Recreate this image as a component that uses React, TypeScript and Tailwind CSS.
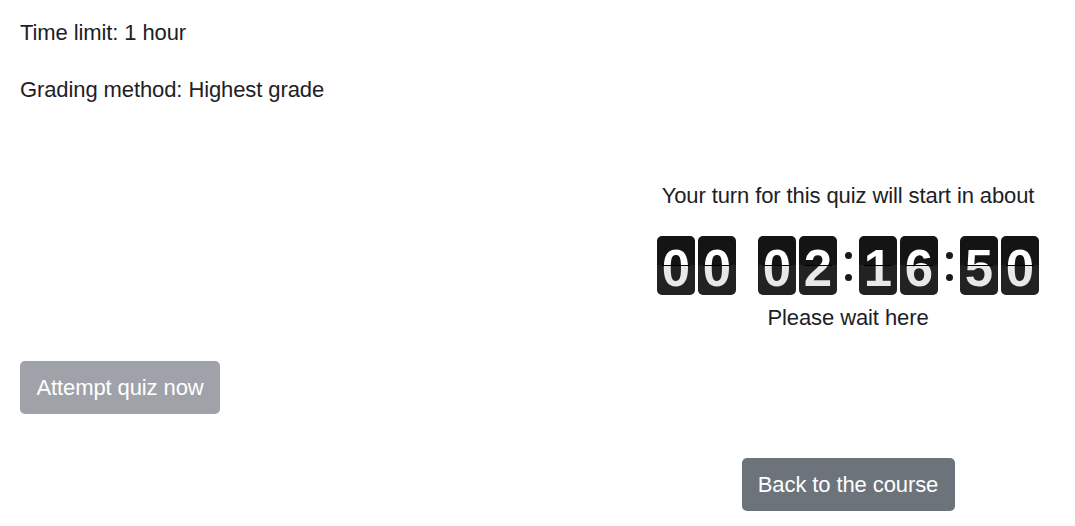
const countdown = [
  ["0", "0"],
  ["0", "2"],
  ["1", "6"],
  ["5", "0"],
];

function FlipCard({ digit }: { digit: string }) {
  return (
    <div className="relative h-[59px] w-[38px] rounded-[5px] bg-[linear-gradient(to_bottom,#141414_50%,#222222_50%)]">
      <span className="flex h-full w-full items-center justify-center bg-[linear-gradient(to_bottom,#ffffff_50%,#e8e8e8_50%)] bg-clip-text pt-[5px] font-['Liberation_Sans',Arial,sans-serif] text-[51px] leading-none font-bold tracking-normal text-transparent">
        {digit}
      </span>
      <div className="absolute top-[29px] right-[5px] left-[5px] h-px bg-black" />
    </div>
  );
}

function Colon() {
  return (
    <div className="flex w-[22px] flex-col items-center pt-[16px]">
      <div className="h-[7px] w-[7px] rounded-full bg-[#1a1a1a]" />
      <div className="mt-[15px] h-[7px] w-[7px] rounded-full bg-[#1a1a1a]" />
    </div>
  );
}

function Clock() {
  return (
    <div className="flex h-[59px]">
      {countdown.map((pair, i) => (
        <div key={i} className="flex">
          {i === 1 && <div className="w-[22px]" />}
          {i > 1 && <Colon />}
          <div className="flex gap-[3px]">
            {pair.map((d, j) => (
              <FlipCard key={j} digit={d} />
            ))}
          </div>
        </div>
      ))}
    </div>
  );
}

export default function App() {
  return (
    <main className="min-h-screen bg-white px-5 pt-[18px] font-['Liberation_Sans',Arial,sans-serif] text-[22px] leading-[30px] tracking-[-0.1px] text-[#1d2125]">
      <p>Time limit: 1 hour</p>
      <p className="mt-[27px]">Grading method: Highest grade</p>

      <div className="mt-[76px] flex">
        <div className="w-3/5" />
        <div className="flex w-2/5 flex-col items-center">
          <p>Your turn for this quiz will start in about</p>
          <div className="mt-[25px]">
            <Clock />
          </div>
          <p className="mt-[8px]">Please wait here</p>
        </div>
      </div>

      <button
        disabled
        className="mt-[28px] flex h-[53px] w-[200px] items-center justify-center rounded-[5px] bg-[#9fa3a9] text-white"
      >
        Attempt quiz now
      </button>

      <div className="mt-[44px] flex">
        <div className="w-3/5" />
        <div className="flex w-2/5 justify-center">
          <button className="flex h-[53px] w-[213px] items-center justify-center rounded-[5px] bg-[#6c737a] text-white">
            Back to the course
          </button>
        </div>
      </div>
    </main>
  );
}
